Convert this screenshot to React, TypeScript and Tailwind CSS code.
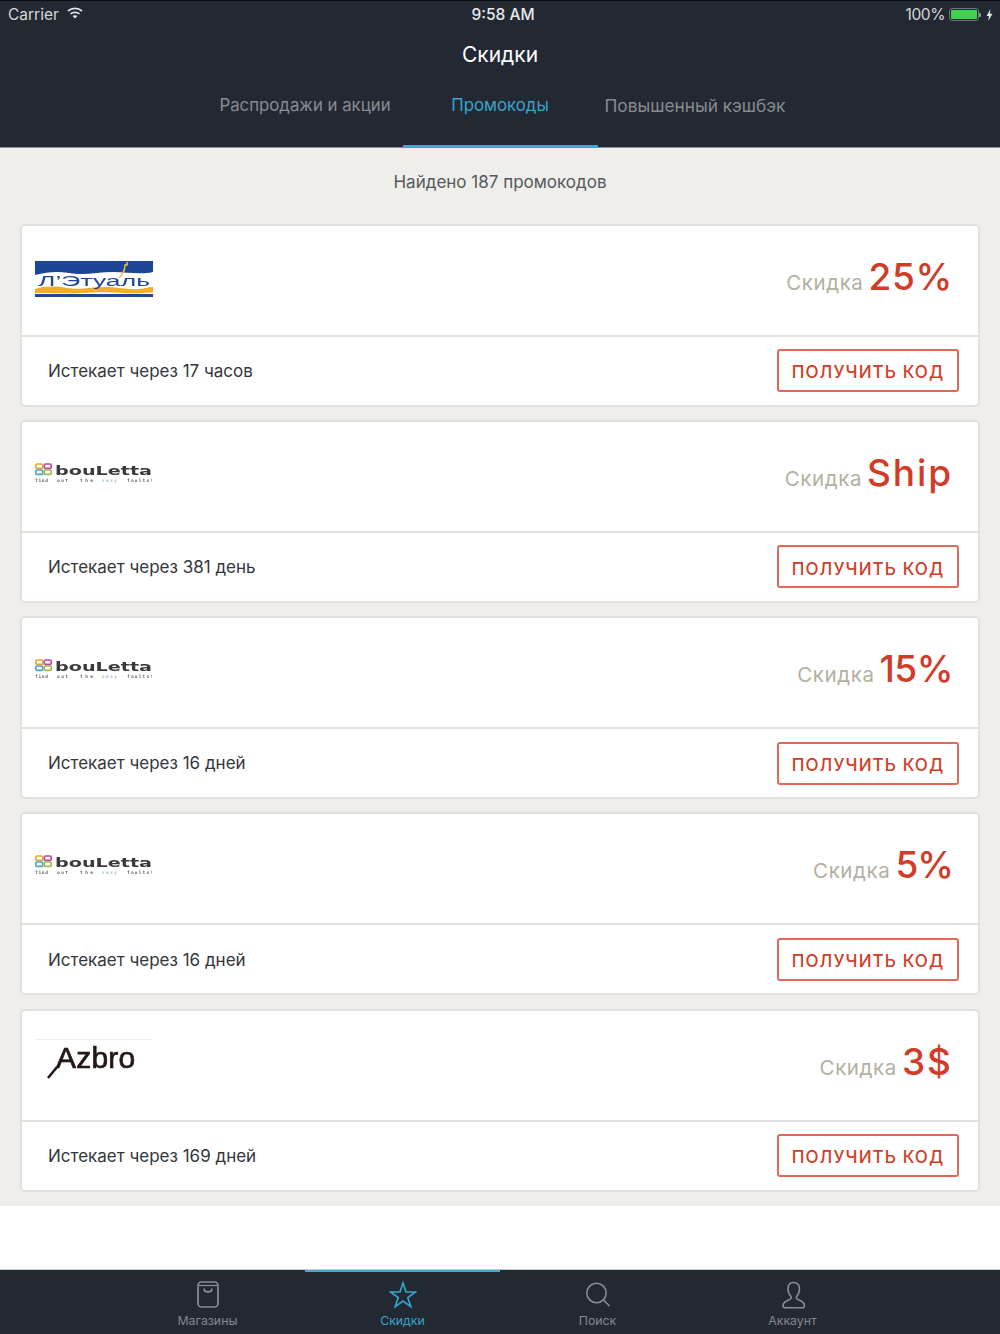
import React from "react";

function LetualLogo() {
  return (
    <svg width="120" height="80" viewBox="0 0 120 80" className="block blur-[0.4px]">
      <g transform="translate(1 24)">
        <rect width="118" height="36" fill="#1d4696" />
        <path d="M0 14 C12 11 22 10 34 12 C50 15 62 11 78 11 C92 11 106 14 118 11 V33 H0 Z" fill="#ffffff" />
        <path d="M0 28 C10 25 20 25 32 27 C46 29 56 26 70 26 C84 26 92 29 104 28 C110 27.500 114 26 118 26 V31.500 C108 31.500 100 33 88 32 C74 31 62 31 48 32 C34 33 14 31.500 0 32 Z" fill="#f4ae26" />
        <path d="M92 1 L92 4 L90 4 Q90 11 84 17" fill="none" stroke="#eec23c" strokeWidth="1.5" />
        <text x="3" y="24.500" fontFamily="'Liberation Sans', sans-serif" fontSize="14" fill="#1d4696" textLength="112" lengthAdjust="spacingAndGlyphs">Л’Этуаль</text>
      </g>
    </svg>
  );
}

function BoulettaLogo() {
  return (
    <svg width="120" height="80" viewBox="0 0 120 80" className="block blur-[0.4px]">
      <g transform="translate(1 30)">
        <rect x="0.8" y="1" width="7" height="4.4" rx="1.5" fill="none" stroke="#e6a53a" strokeWidth="1.7" />
        <rect x="9.3" y="1" width="7" height="4.4" rx="1.5" fill="none" stroke="#c0499b" strokeWidth="1.7" />
        <rect x="0.8" y="7" width="7" height="4.4" rx="1.5" fill="none" stroke="#4da2c9" strokeWidth="1.7" />
        <rect x="9.3" y="7" width="7" height="4.4" rx="1.5" fill="none" stroke="#a0b846" strokeWidth="1.7" />
        <text x="20" y="12" fontFamily="'DejaVu Sans', sans-serif" fontWeight="700" fontSize="12" fill="#3a3a3c" textLength="97" lengthAdjust="spacingAndGlyphs">bouLetta</text>
        <text x="0" y="19" fontFamily="'DejaVu Sans Mono', monospace" fontWeight="700" fontSize="4.5" fill="#666666" textLength="13">find</text>
        <text x="22" y="19" fontFamily="'DejaVu Sans Mono', monospace" fontWeight="700" fontSize="4.5" fill="#666666" textLength="11">out</text>
        <text x="45" y="19" fontFamily="'DejaVu Sans Mono', monospace" fontWeight="700" fontSize="4.5" fill="#666666" textLength="13">the</text>
        <text x="67" y="19" fontFamily="'DejaVu Sans Mono', monospace" fontWeight="700" fontSize="4.5" fill="#9dc0dc" textLength="15">sexy</text>
        <text x="92" y="19" fontFamily="'DejaVu Sans Mono', monospace" fontWeight="700" fontSize="4.5" fill="#666666" textLength="26">faults!</text>
      </g>
    </svg>
  );
}

function AzbroLogo() {
  return (
    <svg width="120" height="80" viewBox="0 0 120 80" className="block blur-[0.3px]">
      <rect x="1" y="17" width="118" height="1" fill="#eeeeee" />
      <text x="22" y="46" fontFamily="'Liberation Sans', sans-serif" fontSize="30" letterSpacing="0.2" fill="#231815" stroke="#231815" strokeWidth="0.7">Azbro</text>
      <path d="M23 45 L14 56" stroke="#231815" strokeWidth="2.6" fill="none" />
    </svg>
  );
}

function Card({ logo, big, exp, track }: { logo: React.ReactNode; big: string; exp: string; track: string }) {
  return (
    <div className="bg-white border-2 border-[#e2e1de] rounded-[5px] h-[183px] flex flex-col">
      <div className="h-[109px] shrink-0 border-b-2 border-[#e2e1de] flex justify-between pl-[12px] pr-[25px] box-content">
        <div className="w-[120px] pt-[11px]">{logo}</div>
        <div className="flex items-baseline gap-[5px] h-[70px] pt-[24px]">
          <span className="text-[#b4b0a0] text-[20.5px] tracking-[0.6px]">Скидка</span>
          <span className={"text-[#d13c28] text-[37px] leading-[54px] font-medium " + track}>{big}</span>
        </div>
      </div>
      <div className="flex-1 flex items-center justify-between pl-[26px] pr-[19px]">
        <span className="text-[#33363b] text-[17px] pt-[2px]">{exp}</span>
        <div className="w-[182px] h-[43px] pt-[5px] border-2 border-[#e0695a] rounded-[3px] flex items-center justify-center text-[#d13c28] text-[17px] tracking-[1.1px] font-medium">
          ПОЛУЧИТЬ КОД
        </div>
      </div>
    </div>
  );
}

function TabIcon({ i }: { i: number }) {
  if (i === 0)
    return (
      <svg width="28" height="30" viewBox="0 0 28 30" fill="none" stroke="#8a8d92" strokeWidth="1.7">
        <rect x="4" y="2" width="20" height="25" rx="3.5" />
        <path d="M5 5.5 H23" strokeWidth="1.2" />
        <path d="M10 8.5 C10 13 18 13 18 8.5" />
      </svg>
    );
  if (i === 1)
    return (
      <svg width="28" height="30" viewBox="0 0 28 30" fill="none" stroke="#2fa5cf" strokeWidth="1.7" strokeLinejoin="miter">
        <path d="M14 3 L17 12 L26.5 12 L18.8 17.6 L21.7 26.6 L14 21 L6.3 26.6 L9.2 17.6 L1.5 12 L11 12 Z" />
      </svg>
    );
  if (i === 2)
    return (
      <svg width="28" height="30" viewBox="0 0 28 30" fill="none" stroke="#8a8d92" strokeWidth="1.6">
        <circle cx="12.5" cy="13" r="9.7" />
        <path d="M19.5 20 L25.5 26" />
      </svg>
    );
  return (
    <svg width="28" height="30" viewBox="0 0 28 30" fill="none" stroke="#8a8d92" strokeWidth="1.6">
      <path d="M14.5 2.5 C10.5 2.5 9 5.5 9 9 C9 12.5 10.5 15 12 16.5 L12 18.5 C10 20.5 4 21 4 25.5 C4 27 5 27.8 6.5 27.8 H23 C24.5 27.8 25.5 27 25.5 25.5 C25.5 21 19.5 20.5 17.5 18.5 L17.5 16.5 C19 15 20.5 12.5 20.5 9 C20.5 5.5 19 2.5 14.5 2.5 Z" />
    </svg>
  );
}

export default function App() {
  const cards = [
    { logo: <LetualLogo />, big: "25%", exp: "Истекает через 17 часов", track: "tracking-[0.7px]" },
    { logo: <BoulettaLogo />, big: "Ship", exp: "Истекает через 381 день", track: "tracking-[1.9px]" },
    { logo: <BoulettaLogo />, big: "15%", exp: "Истекает через 16 дней", track: "tracking-[-0.5px]" },
    { logo: <BoulettaLogo />, big: "5%", exp: "Истекает через 16 дней", track: "tracking-[-1px]" },
    { logo: <AzbroLogo />, big: "3$", exp: "Истекает через 169 дней", track: "tracking-[2px]" },
  ];
  return (
    <div className="w-[1000px] h-[1334px] flex flex-col bg-white overflow-hidden font-['Inter','Noto_Sans',sans-serif]">
      <header className="h-[148px] bg-[#222933] border-t border-[#0b0d10] border-b border-b-[#8c8f92] flex flex-col shrink-0">
        <div className="h-[27px] px-[8px] flex items-center justify-between text-[15.5px] text-[#d6d8da]">
          <div className="flex items-center gap-[8px] w-[300px]">
            <span>Carrier</span>
            <svg width="16" height="12" viewBox="0 0 16 12" fill="none" stroke="#e6e7e8" strokeWidth="1.7" className="mt-[-3px]">
              <path d="M1 4 C5 0.5 11 0.5 15 4" />
              <path d="M3.5 6.8 C6 4.8 10 4.8 12.5 6.8" />
              <path d="M8 11.5 L5.6 9 C7 8 9 8 10.4 9 Z" fill="#e6e7e8" stroke="none" />
            </svg>
          </div>
          <span className="text-[#e8e9ea] font-medium relative left-[3px]">9:58 AM</span>
          <div className="flex items-center justify-end gap-[4px] w-[300px]">
            <span className="tracking-[-0.4px]">100%</span>
            <div className="flex items-center">
              <div className="w-[30px] h-[13px] border border-[#6f7377] rounded-[3px] p-[1px]">
                <div className="w-full h-full bg-[#3fd44f] rounded-[1px]" />
              </div>
              <div className="w-[2px] h-[4px] bg-[#8d9094] rounded-r-[1px]" />
            </div>
            <svg width="7" height="12" viewBox="0 0 7 12" className="ml-[1px] mr-[-1px]">
              <path d="M4.5 0 L0.5 7 H3 L2.2 12 L6.5 4.8 H3.8 Z" fill="#e6e7e8" />
            </svg>
          </div>
        </div>
        <div className="h-[54px] flex items-center justify-center text-white text-[21px]">Скидки</div>
        <div className="flex-1 flex justify-center">
          {["Распродажи и акции", "Промокоды", "Повышенный кэшбэк"].map((t, i) => (
            <div
              key={t}
              className={
                i === 1
                  ? "w-[195px] text-center text-[16.8px] text-[#3aa3c9] pt-[11px] border-b-[3px] border-[#3fa9d6] mb-[-1px]"
                  : i === 0
                    ? "w-[195px] text-center text-[16.8px] text-[#888c90] pt-[11px] whitespace-nowrap"
                    : "w-[195px] text-center text-[17.3px] text-[#888c90] pt-[11px] whitespace-nowrap"
              }
            >
              {t}
            </div>
          ))}
        </div>
      </header>

      <main className="bg-[#efeeea] h-[1058px] shrink-0 px-[20px] flex flex-col">
        <div className="h-[75.5px] shrink-0 pt-[22px] text-center text-[#55585c] text-[17px] leading-[24px]">Найдено 187 промокодов</div>
        <div className="flex flex-col gap-[13.25px]">
          {cards.map((c, i) => (
            <Card key={i} {...c} />
          ))}
        </div>
      </main>

      <div className="flex-1" />

      <nav className="h-[65px] shrink-0 bg-[#222933] border-t border-[#c9cacb] flex justify-center">
        {["Магазины", "Скидки", "Поиск", "Аккаунт"].map((t, i) => (
          <div
            key={t}
            className={
              i === 1
                ? "w-[195px] flex flex-col items-center border-t-2 border-[#3fa9d6] pt-[8px] text-[#3aa3c9]"
                : "w-[195px] flex flex-col items-center pt-[10px] text-[#85888c]"
            }
          >
            <TabIcon i={i} />
            <span className="text-[12.3px] leading-[16px] mt-[3px]">{t}</span>
          </div>
        ))}
      </nav>
    </div>
  );
}
